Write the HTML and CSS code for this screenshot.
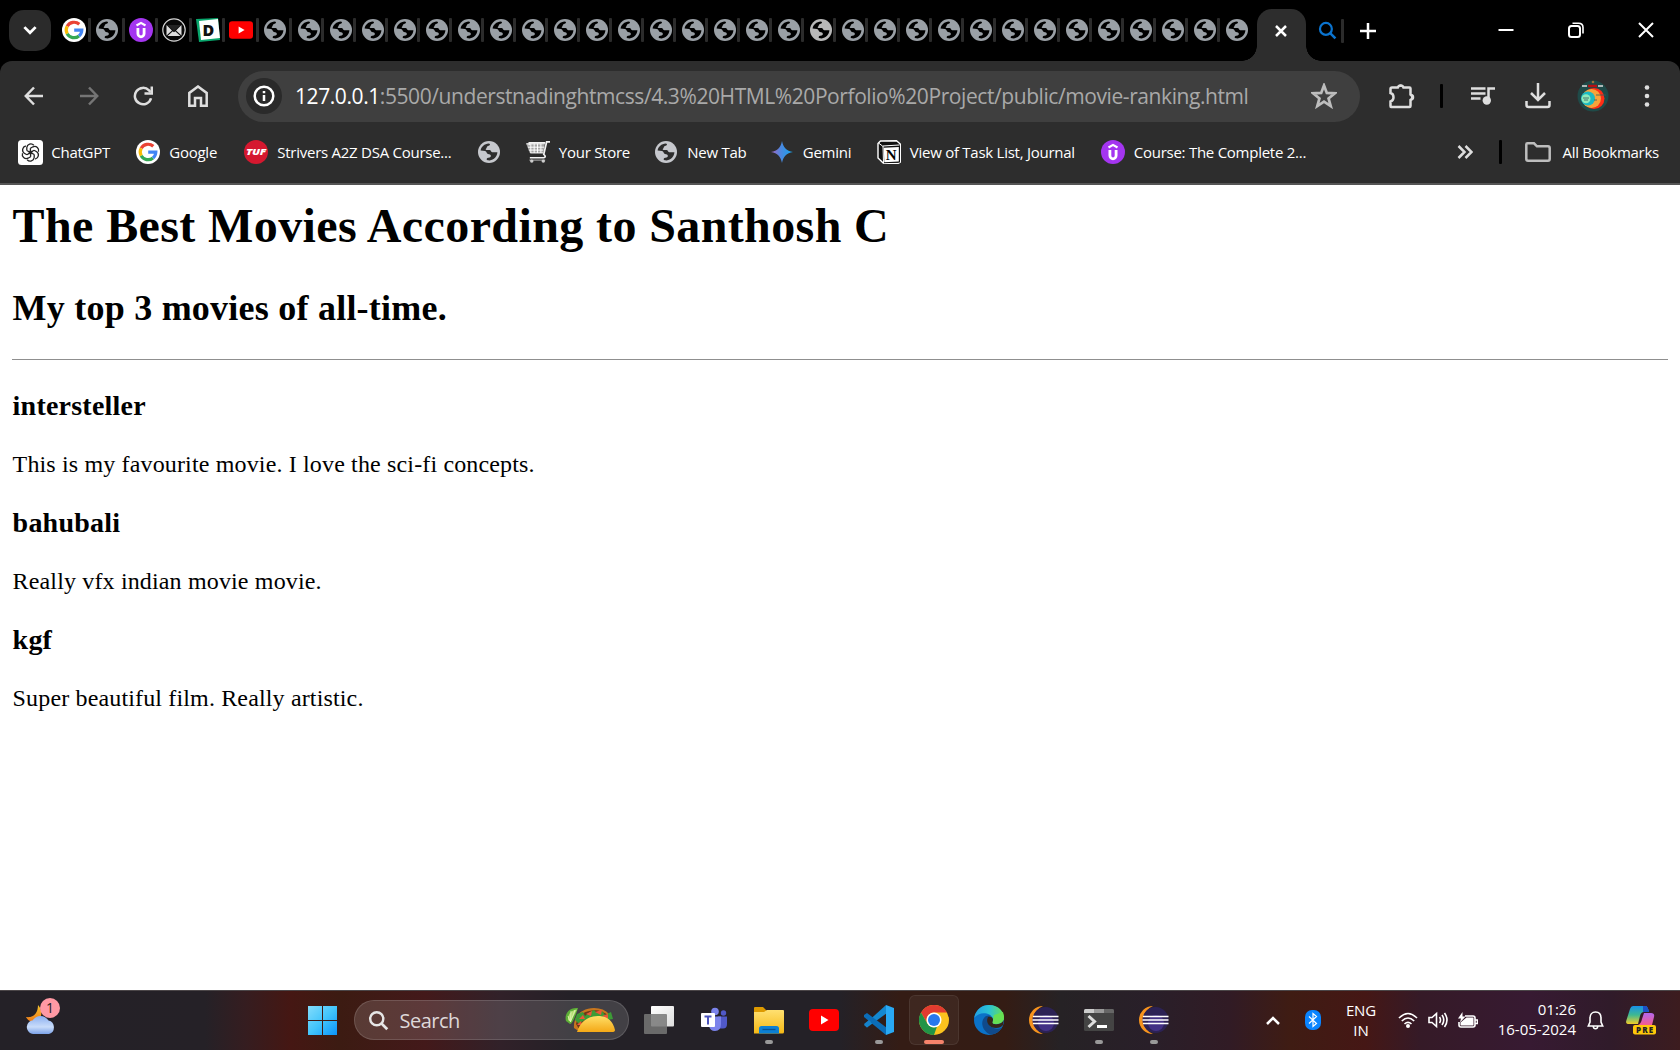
FILE: index.html
```html
<!DOCTYPE html>
<html lang="en">
<head>
<meta charset="utf-8">
<title>Movie ranking</title>
<link rel="stylesheet" href="styles.css">
</head>
<body>
<svg class="defs" aria-hidden="true">
  <symbol id="globe" viewBox="0 0 24 24"><circle cx="12" cy="12" r="11" fill="currentColor"/><path class="cut" d="M3.6 10.4C4.2 6.8 7.4 3.8 11.8 3.5C14 4 12.8 5.8 11 6C9.3 6.3 10.2 8 9 8.7C8 9.2 9 10 10.2 10H12.6C14 10 13.8 12 15.2 12.2L20.4 12.3C20.2 16.6 17 20.1 12.6 20.4L9.8 20C9.3 18 10.8 17.7 12.6 17.5C14 17.2 14.4 15 13 14.4L11 14C9.6 13.6 9.7 11.3 8 10.9Z"/></symbol>
  <symbol id="google" viewBox="0 0 24 24"><circle cx="12" cy="12" r="12" fill="#fff"/><g fill="none" stroke-width="3.2"><path d="M5.2 8.3A7.8 7.8 0 0 1 17.3 6.3" stroke="#ea4335"/><path d="M5.2 15.7A7.8 7.8 0 0 1 5.2 8.3" stroke="#fbbc05"/><path d="M17 17.9A7.8 7.8 0 0 1 5.2 15.7" stroke="#34a853"/><path d="M12.2 12.2H19.8A7.8 7.8 0 0 1 17 17.9" stroke="#4285f4"/></g></symbol>
  <symbol id="udemy" viewBox="0 0 24 24"><circle cx="12" cy="12" r="12" fill="#a435f0"/><path d="M7.5 7.5L12 4.900L16.500 7.5" fill="none" stroke="#fff" stroke-width="2.2"/><path d="M8.900 10V15.500A3.100 3.300 0 0 0 15.100 15.500V10" fill="none" stroke="#fff" stroke-width="2.800"/></symbol>
  <symbol id="youtube" viewBox="0 0 30 22"><rect width="30" height="22" rx="4" fill="#f00"/><path d="M12 6.500L19.500 11L12 15.500Z" fill="#fff"/></symbol>
  <symbol id="eclipse" viewBox="0 0 30 30"><path d="M14 1A14 14 0 0 0 14 29A15 15 0 0 1 14 1Z" fill="#f7941e"/><circle cx="16.500" cy="15" r="13" fill="#2c2255"/><circle cx="17" cy="18" r="8" fill="#433185"/><path d="M4 11.500H29.500M3.500 15H29.500M4 18.500H29.500" stroke="#fff" stroke-width="1.700"/></symbol>
  <symbol id="lens" viewBox="0 0 24 24"><circle cx="10" cy="10" r="7.500" fill="none" stroke="currentColor" stroke-width="2.800"/><path d="M15 15L22 22" stroke="currentColor" stroke-width="3.200"/></symbol>
</svg>

<header class="browser">
  <div class="tabstrip">
    <button class="tab-search" aria-label="Search tabs"><svg viewBox="0 0 12 8" width="14" height="9"><path d="M1 1L6 6L11 1" class="line"/></svg></button>
    <div class="tabs">
      <span class="tab wide"><svg><use href="#google"/></svg></span>
      <span class="tab wide"><svg><use href="#globe"/></svg></span>
      <span class="tab wide"><svg><use href="#udemy"/></svg></span>
      <span class="tab wide"><svg viewBox="0 0 24 24"><circle cx="12" cy="12" r="11.200" fill="#080808" stroke="#d5d5d5" stroke-width="1.200"/><path d="M5 7H19L12 13Z" fill="#222"/><path d="M4.500 7L10 12.500L4.500 17.500ZM19.500 7L14 12.500L19.500 17.500ZM5.500 18L10.800 13.300L12 14.300L13.200 13.300L18.500 18Z" fill="#dedede"/></svg></span>
      <span class="tab wide"><svg viewBox="0 0 24 24"><path d="M0 1L22 0L24 22L3 24Z" fill="#08a66c"/><path d="M3 3L22 1L24 20L5 22Z" fill="#fff"/><text x="6.500" y="17.500" class="letter-d">D</text></svg></span>
      <span class="tab wide"><svg class="yt"><use href="#youtube"/></svg></span>
      <span class="tab wide"><svg><use href="#globe"/></svg></span>
      <span class="tab"><svg><use href="#globe"/></svg></span>
      <span class="tab"><svg><use href="#globe"/></svg></span>
      <span class="tab"><svg><use href="#globe"/></svg></span>
      <span class="tab"><svg><use href="#globe"/></svg></span>
      <span class="tab"><svg><use href="#globe"/></svg></span>
      <span class="tab"><svg><use href="#globe"/></svg></span>
      <span class="tab"><svg><use href="#globe"/></svg></span>
      <span class="tab"><svg><use href="#globe"/></svg></span>
      <span class="tab"><svg><use href="#globe"/></svg></span>
      <span class="tab"><svg><use href="#globe"/></svg></span>
      <span class="tab"><svg><use href="#globe"/></svg></span>
      <span class="tab"><svg><use href="#globe"/></svg></span>
      <span class="tab"><svg><use href="#globe"/></svg></span>
      <span class="tab"><svg><use href="#globe"/></svg></span>
      <span class="tab"><svg><use href="#globe"/></svg></span>
      <span class="tab"><svg><use href="#globe"/></svg></span>
      <span class="tab light"><svg><use href="#globe"/></svg></span>
      <span class="tab"><svg><use href="#globe"/></svg></span>
      <span class="tab"><svg><use href="#globe"/></svg></span>
      <span class="tab"><svg><use href="#globe"/></svg></span>
      <span class="tab"><svg><use href="#globe"/></svg></span>
      <span class="tab"><svg><use href="#globe"/></svg></span>
      <span class="tab"><svg><use href="#globe"/></svg></span>
      <span class="tab"><svg><use href="#globe"/></svg></span>
      <span class="tab"><svg><use href="#globe"/></svg></span>
      <span class="tab"><svg><use href="#globe"/></svg></span>
      <span class="tab"><svg><use href="#globe"/></svg></span>
      <span class="tab"><svg><use href="#globe"/></svg></span>
      <span class="tab"><svg><use href="#globe"/></svg></span>
      <span class="tab last"><svg><use href="#globe"/></svg></span>
    </div>
    <div class="tab-active"><svg viewBox="0 0 12 12" width="12" height="12"><path d="M1 1L11 11M11 1L1 11" class="line"/></svg></div>
    <div class="tab-find"><svg><use href="#lens"/></svg></div>
    <svg class="new-tab" viewBox="0 0 16 16"><path d="M8 0V16M0 8H16" class="line"/></svg>
    <div class="window-controls">
      <svg viewBox="0 0 16 16"><path d="M0.500 8H15.500" class="line"/></svg>
      <svg viewBox="0 0 16 16"><rect x="1" y="4" width="11" height="11" rx="2.500" class="line"/><path d="M4.500 1.200H10.500Q15 1.200 15 5.500V11.500" class="line thin"/></svg>
      <svg viewBox="0 0 16 16"><path d="M1 1L15 15M15 1L1 15" class="line"/></svg>
    </div>
  </div>

  <div class="toolbar">
    <nav class="nav">
      <svg viewBox="0 0 20 20"><path d="M19 10H2M10 1.500L1.800 10L10 18.500" class="line"/></svg>
      <svg viewBox="0 0 20 20" class="dim"><path d="M1 10H18M10 1.500L18.200 10L10 18.500" class="line"/></svg>
      <svg viewBox="0 0 20 20"><path d="M18 12.200A8.200 8.200 0 1 1 16 4.400L17.500 6" class="line"/><path d="M18.800 0.500V7.600H11.500" class="line"/></svg>
      <svg viewBox="0 0 20 22" class="home"><path d="M1.300 20.700V8L10 1.500L18.700 8V20.700H13V13H7V20.700Z" class="line"/></svg>
    </nav>
    <div class="omnibox">
      <span class="site-info"><svg viewBox="0 0 22 22"><circle cx="11" cy="11" r="9.300" class="line"/><path d="M11 10V16M11 6V8.200" class="line"/></svg></span>
      <span class="url"><b>127.0.0.1</b>:5500/understnadinghtmcss/4.3%20HTML%20Porfolio%20Project/public/movie-ranking.html</span>
      <svg class="star" viewBox="0 0 24 24"><path d="M12 2.300L14.600 9.200L22 9.500L16.200 14.200L18.200 21.300L12 17.200L5.800 21.300L7.800 14.200L2 9.500L9.400 9.200Z" class="line"/></svg>
    </div>
    <div class="actions">
      <svg class="puzzle" viewBox="0 0 26 26"><path d="M3 4.500H8.800A3 3 0 0 1 14.500 4.500H20.500Q21.500 4.500 21.500 5.500V11.500A3 3 0 0 1 21.500 17V23Q21.500 24 20.500 24H2Q1.500 24 1.500 23V18.500C5.500 17.500 5.500 11 1.500 10V6Q1.500 4.500 3 4.500Z" class="line"/><path d="M8.500 4A3.200 3.200 0 0 1 14.700 4ZM22 11A3.200 3.200 0 0 1 22 17.500Z" fill="currentColor"/></svg>
      <span class="divider"></span>
      <svg class="media" viewBox="0 0 24 20"><path d="M0 2.500H14.500M0 7.500H14.500M0 12.500H9.500M17.500 14V2.500H24" class="line"/><circle cx="15.800" cy="14.500" r="4.200" fill="currentColor"/></svg>
      <svg class="download" viewBox="0 0 26 26"><path d="M13 0V17M6 10L13 17L20 10M1.500 18V22Q1.500 24 3.500 24H22.500Q24.500 24 24.500 22V18" class="line"/></svg>
      <svg class="avatar" viewBox="0 0 32 32"><circle cx="16" cy="16" r="15.500" fill="#1f4a48"/><circle cx="17" cy="18.500" r="10.500" fill="#ff2d16"/><circle cx="14.500" cy="18.500" r="9.500" fill="#f6a33a"/><circle cx="11" cy="18.500" r="7" fill="#19b9c2"/><circle cx="9" cy="18.800" r="4.500" fill="#8ee9ba"/><path d="M6 18H12M7 20H11M19 15H29M17 20H20" stroke="#355c5a" stroke-width=".8"/><path d="M5 6H10M21 6H26" stroke="#ddd" stroke-width="1.600"/><path d="M11 6H20" stroke="#b80f13" stroke-width="2.500"/><circle cx="16" cy="2" r="1.300" fill="#a0733b"/></svg>
      <svg class="more" viewBox="0 0 6 24"><circle cx="3" cy="3.500" r="2.300"/><circle cx="3" cy="12" r="2.300"/><circle cx="3" cy="20.500" r="2.300"/></svg>
    </div>
  </div>

  <div class="bookmarks">
    <a class="bm"><svg viewBox="0 0 25 25"><rect width="25" height="25" rx="3.500" fill="#fff"/><g fill="none" stroke="#222" stroke-width="1.300"><path id="knot" d="M8.800 10.500V7.500A4 4 0 0 1 15.800 5.200M8.800 10.500L14.500 13.700"/><use href="#knot" transform="rotate(60 12.500 12.500)"/><use href="#knot" transform="rotate(120 12.500 12.500)"/><use href="#knot" transform="rotate(180 12.500 12.500)"/><use href="#knot" transform="rotate(240 12.500 12.500)"/><use href="#knot" transform="rotate(300 12.500 12.500)"/></g></svg>ChatGPT</a>
    <a class="bm"><svg><use href="#google"/></svg>Google</a>
    <a class="bm"><svg viewBox="0 0 24 24"><circle cx="12" cy="12" r="12" fill="#d5182f"/><text x="2" y="15.300" class="tuf" textLength="20" lengthAdjust="spacingAndGlyphs">TUF</text></svg>Strivers A2Z DSA Course...</a>
    <a class="bm"><svg class="world"><use href="#globe"/></svg></a>
    <a class="bm"><svg viewBox="0 0 25 24"><path d="M0 3L19.500 4L18 13H4Z" fill="#a5a5a5"/><path d="M0.500 3.500H19.500M2 7H19M3 10H18M4.500 13H18M5 3V13M8.500 3V13M12 3V13M15.500 3V13" stroke="#fff" stroke-width="1"/><path d="M3.500 5V2.500H20M25 1.500H21.500L18.500 14.500Q21.500 17 18.500 18H4" fill="none" stroke="#f2f2f2" stroke-width="1.800"/><path d="M3.500 20.500H20" stroke="#888" stroke-width="1.500"/><circle cx="6" cy="21.500" r="1.800" fill="#ccc"/><circle cx="18" cy="21.500" r="1.800" fill="#ccc"/></svg>Your Store</a>
    <a class="bm"><svg class="world"><use href="#globe"/></svg>New Tab</a>
    <a class="bm"><svg viewBox="0 0 24 24"><defs><linearGradient id="gem"><stop offset="0" stop-color="#a566c2"/><stop offset=".45" stop-color="#4b87df"/><stop offset="1" stop-color="#14a5ee"/></linearGradient></defs><path d="M12 1C13.200 7.500 16.500 10.800 23 12C16.500 13.200 13.200 16.500 12 23C10.800 16.500 7.500 13.200 1 12C7.500 10.800 10.800 7.500 12 1Z" fill="url(#gem)"/></svg>Gemini</a>
    <a class="bm"><svg viewBox="0 0 24 24"><path d="M1 3.500L3.500 1L19.500 .8L23.300 4V22L21 23.500L6.500 23.300L1 18Z" fill="#111" stroke="#fff" stroke-width="1.400"/><path d="M5.500 6L23 5V22.500L6.500 23.300Z" fill="#111"/><path d="M6.800 7.800L21.800 7V21.500L7.300 22.200Z" fill="#fff"/><path d="M1.500 3L5.500 6L22.500 5M6 6L6.500 23" stroke="#fff" fill="none"/><text x="8.700" y="19.500" class="notion">N</text></svg>View of Task List, Journal</a>
    <a class="bm"><svg><use href="#udemy"/></svg>Course: The Complete 2...</a>
    <div class="bm-end">
      <svg class="chevrons" viewBox="0 0 16 14"><path d="M1.500 1L7.500 7L1.500 13M8.500 1L14.500 7L8.500 13" class="line"/></svg>
      <span class="divider"></span>
      <svg class="folder" viewBox="0 0 26 20"><path d="M1.300 2.500Q1.300 1.300 2.500 1.300H9L12 4.300H23Q24.700 4.300 24.700 6V17Q24.700 18.700 23 18.700H3Q1.300 18.700 1.300 17Z" class="line"/></svg>
      <span>All Bookmarks</span>
    </div>
  </div>
</header>

<main class="page">
  <h1>The Best Movies According to Santhosh C</h1>
  <h2>My top 3 movies of all-time.</h2>
  <hr>
  <h3>intersteller</h3>
  <p>This is my favourite movie. I love the sci-fi concepts.</p>
  <h3>bahubali</h3>
  <p>Really vfx indian movie movie.</p>
  <h3>kgf</h3>
  <p>Super beautiful film. Really artistic.</p>
</main>

<footer class="taskbar">
  <div class="weather">
    <svg viewBox="0 0 30 30"><defs><linearGradient id="moon" x2="0" y2="1"><stop stop-color="#f7c52e"/><stop offset="1" stop-color="#ee7818"/></linearGradient><linearGradient id="cloud" x2="0" y2="1"><stop stop-color="#8cb0f0"/><stop offset=".6" stop-color="#c9dcfa"/><stop offset="1" stop-color="#7ba2e8"/></linearGradient></defs><path d="M12 0C19 8 14 18 6 17C3 16 1 14 0 12C8 13 12 8 12 0Z" fill="url(#moon)"/><path d="M7 29A7 7 0 0 1 3 17Q5 15 6.500 15.500A9.500 9.500 0 0 1 22.500 15.500A7 7 0 0 1 23 29Z" fill="url(#cloud)"/></svg>
    <span class="badge">1</span>
  </div>
  <svg class="start" viewBox="0 0 29 29"><defs><linearGradient id="win" gradientUnits="userSpaceOnUse" x1="0" y1="0" x2="29" y2="29"><stop stop-color="#83dcfb"/><stop offset=".5" stop-color="#43c5fb"/><stop offset="1" stop-color="#0b93fa"/></linearGradient></defs><path d="M0 0H14V14H0ZM15 0H29V14H15ZM0 15H14V29H0ZM15 15H29V29H15Z" fill="url(#win)"/></svg>
  <div class="search"><svg class="mag"><use href="#lens"/></svg><span>Search</span>
    <svg class="taco" viewBox="0 0 50 26"><defs><linearGradient id="shell" x2="0" y2="1"><stop stop-color="#ffdf68"/><stop offset="1" stop-color="#f4a816"/></linearGradient></defs><path d="M13 1C4 0-1 7 1 14L5 17Q8 17 13 1Z" fill="#5daf37"/><path d="M12 2.500C6 3 2.500 8 3 13L5.500 15Z" fill="#b5df73"/><path d="M5.500 15L6 4M5.500 15L10 3M5 14L3 9" stroke="#eaf7c8" stroke-width=".7"/><path d="M9 21C8 9 17 1 29 1Q39 1 44 7L26 23H12Z" fill="#c9771e"/><path d="M11 17Q13 6 24 4Q35 1 44 9L40 15L20 14L14 22Z" fill="#713719"/><path d="M12 7L18 5L20 9L25 5L29 3L32 6L37 4L40 8L46 5L48 12L42 13L35 9L26 11L18 14L14 17L10 13Z" fill="#3d9b36"/><path d="M14 12L18 8L20 12ZM21 7L27 4L26 9ZM30 5L37 3L36 8ZM37 9L43 7L43 12ZM12 18L16 14L17 18Z" fill="#ec5638"/><path d="M12 25C15 14 25 8 35 9Q47 10 50 23Q50 25 47 25Z" fill="url(#shell)"/></svg>
  </div>
  <div class="apps">
    <span class="app"><svg viewBox="0 0 30 30"><defs><linearGradient id="tv" x2="1" y2="1"><stop stop-color="#fff"/><stop offset="1" stop-color="#ddd"/></linearGradient></defs><rect x="7" y="1" width="23" height="20.500" rx="1" fill="url(#tv)"/><rect y="9" width="23" height="20" rx="1" fill="#777" fill-opacity=".85"/></svg></span>
    <span class="app"><svg viewBox="0 0 30 30"><circle cx="16" cy="6.500" r="3.800" fill="#7b83eb"/><circle cx="24.500" cy="8" r="2.700" fill="#5059c9"/><path d="M19 11.500H28V19Q28 23.500 24 23.500H19Z" fill="#5059c9"/><path d="M10 11.500H22V19Q22 26 16 26Q11 26 10 21Z" fill="#7b83eb"/><rect x="2" y="8" width="14" height="14" rx="1" fill="#fff"/><path d="M5.500 11.500H12.500M9 11.500V19.500" stroke="#4b53bc" stroke-width="2"/></svg></span>
    <span class="app run"><svg viewBox="0 0 30 30"><defs><linearGradient id="fold" x2="0" y2="1"><stop stop-color="#ffe071"/><stop offset="1" stop-color="#f5b915"/></linearGradient></defs><path d="M0 3Q0 2 1 2H9L13 6V10H0Z" fill="#dd9a00"/><path d="M0 7H10L13 5H29Q30 5 30 6V27Q30 28.500 28.500 28.500H0Z" fill="url(#fold)"/><path d="M5 28.500V23.500Q5 21 7.500 21H22.500Q25 21 25 23.500V28.500Z" fill="#0c80d3"/><path d="M8.500 24.500H21.500" stroke="#075293" stroke-width="1.300"/></svg></span>
    <span class="app"><svg><use href="#youtube"/></svg></span>
    <span class="app run"><svg viewBox="0 0 30 30"><path d="M0 20L22 0L23 8L3 22.500Z" fill="#1488d0"/><path d="M0 10L3 8L23 23L22 30L0 12Z" fill="#0b6db8"/><path d="M22 0L30 3V27L22 30Z" fill="#29a9f4"/><path d="M0 19L5 15L7 17L3 22.500Z" fill="#1682ca"/></svg></span>
    <span class="app current"><svg viewBox="0 0 30 30"><circle cx="15" cy="15" r="15" fill="#fcc31e"/><path d="M2 7.500A15 15 0 0 1 28 7.500H15A7.500 7.500 0 0 0 8.500 18.700Z" fill="#e23b30"/><path d="M2 7.500L8.500 18.750A7.500 7.500 0 0 0 18 21.500L15 30A15 15 0 0 1 2 7.500Z" fill="#219447"/><circle cx="15" cy="15" r="7.500" fill="#fff"/><circle cx="15" cy="15" r="6" fill="#2878ec"/></svg></span>
    <span class="app"><svg viewBox="0 0 30 30"><defs><linearGradient id="edgetop"><stop stop-color="#219ee4"/><stop offset=".5" stop-color="#2bc3d5"/><stop offset="1" stop-color="#66df54"/></linearGradient></defs><circle cx="15" cy="15" r="15" fill="#0b72c8"/><path d="M0 13C2 4 8 0 15 0C25 0 30 7 30 13C30 18 25 20 20 19C16 18 19 17 19 14C18 8 6 5 0 13Z" fill="url(#edgetop)"/><path d="M12 11C6 15 7 25 16 29.500C21 30 26 26 28 22.500C21 26 13 21 14 15Q14 12 17 11Q15 10 12 11Z" fill="#104a8b"/><path d="M14 12C11 18 16 23 22 23Q27 23 29 20L30 12Q30 18 24 19C17 20 19 17 19 14Q18 11 14 12Z" fill="#35251b"/><path d="M19 14C20 17 16 19 22 19Q30 18 30 12L29 7L20 10Z" fill="#66df54"/></svg></span>
    <span class="app"><svg><use href="#eclipse"/></svg></span>
    <span class="app run"><svg viewBox="0 0 30 30"><rect y="4" width="30" height="22" rx="1.500" fill="#444"/><path d="M0 8V5.500Q0 4 1.500 4H10V8Z" fill="#ccc"/><path d="M10 4H20V8H10Z" fill="#999"/><path d="M20 4H28.500Q30 4 30 5.500V8H20Z" fill="#666"/><path d="M4.500 11L10.500 16.500L4.500 22" fill="none" stroke="#ddd" stroke-width="3"/><path d="M13 21.500H23" stroke="#fff" stroke-width="3"/></svg></span>
    <span class="app run"><svg><use href="#eclipse"/></svg></span>
  </div>
  <div class="tray">
    <svg class="up" viewBox="0 0 14 9"><path d="M1 8L7 2L13 8" class="line"/></svg>
    <svg class="bt" viewBox="0 0 16 20"><rect width="16" height="20" rx="7" fill="#0a84ff"/><path d="M4 6.500L11.500 13.500L8 16.500V3.500L11.500 6.500L4 13.500" fill="none" stroke="#fff" stroke-width="1.200"/></svg>
    <span class="lang">ENG<br>IN</span>
    <svg class="wifi" viewBox="0 0 20 16"><path d="M1 6Q10-3 19 6M3.800 9Q10 3 16.200 9M6.500 12Q10 8.700 13.500 12" class="line thin"/><circle cx="10" cy="14" r="2" fill="#fff"/></svg>
    <svg class="vol" viewBox="0 0 20 18"><path d="M1 6.500H4L8.500 2.500V15.500L4 11.500H1ZM11.500 6Q13.500 9 11.500 12M14 4Q17.500 9 14 14M16.500 2Q21.500 9 16.500 16" class="line thin"/></svg>
    <svg class="bat" viewBox="0 0 20 17"><path d="M7 4H15Q17 4 17 6V13Q17 15 15 15H3Q1 15 1 13V10M17 8H19.500V11.500H17" class="line thin"/><path d="M8.500 5.500H15.500V13.500H2.500V10.500Z" fill="#fff"/><path d="M4.500 0L0 6.500H3L2 10.500L7.500 4.500H4.500Z" fill="#fff"/></svg>
    <span class="clock">01:26<br>16-05-2024</span>
    <svg class="bell" viewBox="0 0 16 19"><path d="M8 1C4.500 1 2.500 3.500 2.500 7V11L.8 15H15.200L13.500 11V7C13.500 3.500 11.500 1 8 1ZM5.800 15.500Q6 17.800 8 17.800T10.200 15.500" class="line thin"/></svg>
    <svg class="copilot" viewBox="0 0 30 30"><defs><linearGradient id="cp1" x2="0" y2="1"><stop stop-color="#1790e8"/><stop offset=".5" stop-color="#3eb991"/><stop offset="1" stop-color="#f3cc28"/></linearGradient><linearGradient id="cp2" x2="0" y2="1"><stop stop-color="#b267ee"/><stop offset="1" stop-color="#f45c8d"/></linearGradient></defs><path d="M18 8H25Q29 8 28 12L26 20H12Q15 19 16 14Z" fill="url(#cp2)"/><path d="M7 1H20Q22 2 23 7H18Q15 7 14 11L12 19H3Q-1 19 .500 15L4 4Q5 1 7 1Z" fill="url(#cp1)"/><path d="M17 1H20Q22 2 23 7H17Z" fill="#1b50c5"/><rect x="7" y="20" width="23" height="9.500" rx="2" fill="#ffc80a"/><text x="10" y="27.800" class="pre" textLength="17">PRE</text></svg>
  </div>
</footer>
</body>
</html>
```
FILE: styles.css
```css
* { box-sizing: border-box; }
body { margin: 0; width: 1680px; height: 1050px; overflow: hidden; display: flex; flex-direction: column; background: #fff; font-family: "Open Sans", "Noto Sans", sans-serif; }
svg { display: block; flex: none; }
.defs { position: absolute; width: 0; height: 0; }
.line { fill: none; stroke: currentColor; stroke-width: 2.5; }
.line.thin { stroke-width: 1.6; }

/* tab strip */
.browser { flex: none; height: 185px; background: #000; color: #fff; }
.tabstrip { display: flex; height: 61px; padding-left: 9px; }
.tab-search { display: grid; place-items: center; width: 42px; height: 41px; margin: 10px 6.5px 0 0; padding: 0; border: 0; border-radius: 15px; background: #2b2b2b; color: #fff; }
.tabs { display: flex; height: 61px; --cut: #000; color: #9aa0a6; }
.tab { display: flex; align-items: center; width: 32px; padding: 0 0 1px 5px; }
.tab.wide { width: 33.5px; padding-left: 4.3px; }
.tab svg { width: 24px; height: 24px; }
.tab::after { content: ""; width: 3px; height: 24px; margin-left: auto; border-radius: 1px; background: #2b2b2b; }
.tab.last::after { display: none; }
.tab.light { color: #b8b8b8; }
.cut { fill: var(--cut); }
.letter-d { font: 800 16px "Open Sans", sans-serif; fill: #111; }
.tab-active { position: relative; display: grid; place-items: center; width: 49px; height: 52px; margin: 9px 0 0 4.5px; border-radius: 15px 15px 0 0; background: #2d2d2d; padding-bottom: 9px; }
.tab-active::before, .tab-active::after { content: ""; position: absolute; bottom: 0; width: 15px; height: 15px; }
.tab-active::before { right: 100%; background: radial-gradient(circle at 0 0, #0000 14.5px, #2d2d2d 15px); }
.tab-active::after { left: 100%; background: radial-gradient(circle at 100% 0, #0000 14.5px, #2d2d2d 15px); }
.tab-find { display: flex; align-items: center; width: 38px; margin-left: 12px; color: #0b74cf; }
.tab-find svg { width: 19px; height: 19px; }
.tab-find::after { content: ""; width: 3px; height: 24px; margin-left: 4px; border-radius: 1px; background: #2b2b2b; }
.new-tab { width: 16px; height: 16px; margin: 22.5px 0 0 4px; }
.window-controls { display: flex; gap: 54px; margin: 22px 26px 0 auto; }
.window-controls svg { width: 16px; height: 16px; }
.window-controls .line { stroke-width: 2; }
.window-controls .thin { stroke-width: 1.6; }

/* toolbar */
.toolbar { display: flex; align-items: center; height: 70px; border-radius: 12px 12px 0 0; background: #2d2d2d; color: #dedede; }
.nav { display: flex; align-items: center; gap: 34.5px; width: 238px; padding-left: 24px; }
.nav svg { width: 20px; height: 20px; }
.nav .home { height: 22px; margin-top: -1px; }
.dim { color: #757575; }
.omnibox { display: flex; align-items: center; width: 1122px; height: 51px; padding-left: 8px; border-radius: 26px; background: #3f3f3f; }
.site-info { display: grid; place-items: center; width: 36px; height: 36px; border-radius: 50%; background: #2a2a2a; color: #fff; }
.site-info svg { width: 22px; height: 22px; }
.url { width: 1016px; margin-left: 13px; font-size: 21px; letter-spacing: -.42px; white-space: nowrap; color: #a9a9a9; }
.url b { font-weight: 400; color: #fff; }
.star { width: 26px; height: 26px; color: #bdbdbd; }
.actions { display: flex; align-items: center; }
.puzzle { width: 26px; height: 26px; margin-left: 28.5px; }
.divider { width: 3px; height: 24px; border-radius: 1px; background: #000; }
.actions .divider { margin-left: 25.5px; }
.media { width: 24px; height: 20px; margin-left: 28px; }
.download { width: 26px; height: 26px; margin-left: 29.5px; }
.avatar { width: 32px; height: 32px; margin-left: 26px; }
.more { width: 6px; height: 24px; margin-left: 35.5px; fill: currentColor; }

/* bookmarks bar */
.bookmarks { display: flex; height: 54px; padding: 0 0 10px 18px; border-bottom: 2px solid #555; background: #2d2d2d; font-size: 15px; letter-spacing: -.26px; white-space: nowrap; }
.bm { display: flex; align-items: center; gap: 9.3px; width: 118px; }
.bm svg { width: 24px; height: 24px; }
.bm:first-child { gap: 8.3px; }
.bm:first-child svg { width: 25px; height: 25px; }
.bm:nth-child(2) { width: 108px; }
.bm:nth-child(3) { width: 233px; }
.bm:nth-child(4) { width: 48.5px; }
.bm:nth-child(5) { width: 128.5px; }
.bm:nth-child(6) { width: 115.5px; }
.bm:nth-child(7) { width: 107px; }
.bm:nth-child(8), .bm:nth-child(9) { width: 224px; }
.world { --cut: #2d2d2d; color: #c6c8cd; }
.tuf { font: italic 800 9px "Open Sans", sans-serif; fill: #fff; }
.notion { font: 700 15px "Liberation Serif", serif; fill: #000; }
.bm-end { display: flex; align-items: center; margin-left: auto; padding-right: 21px; }
.chevrons { width: 16px; height: 14px; margin-right: 26px; color: #dedede; }
.folder { width: 26px; height: 20px; margin: 0 11px 0 23.5px; color: #bdbdbd; }

/* web page */
.page { flex: 1; padding: 13px 12px 0; font: 24px "Liberation Serif", "Times New Roman", serif; color: #000; overflow: hidden; }
.page h1, .page h2, .page h3, .page p { text-indent: .6px; }
.page h1 { margin: 0 0 34px; font-size: 48px; letter-spacing: .39px; }
.page h2 { margin: 0 0 30px; font-size: 36px; letter-spacing: .23px; }
.page hr { height: 1px; margin: 0 0 29px; border: 0; background: #8f8f8f; }
.page h3 { margin: 28px 0; font-size: 28px; line-height: 33px; letter-spacing: .22px; }
.page p { margin: 0; line-height: 28px; letter-spacing: .15px; }

/* taskbar */
.taskbar { flex: none; display: flex; align-items: center; height: 60px; padding-bottom: 1px; border-top: 1px solid #4b4648; color: #fff; background: linear-gradient(90deg, #242127 0, #252127 205px, #351d20 245px, #451713 290px, #3c1b12 340px, #43191a 425px, #312129 500px, #242127 570px, #242127 840px, #341c15 900px, #341c14 1005px, #262225 1060px, #291f29 1150px, #311b25 1230px, #3f1c13 1290px, #451715 1365px, #351a27 1420px, #371a32 1530px, #301b2a 1610px, #3c1c1f 1680px); }
.weather { position: relative; width: 30px; height: 30px; margin-left: 26px; }
.weather svg { width: 30px; height: 30px; }
.badge { position: absolute; left: 14px; top: -7px; width: 20px; height: 20px; border-radius: 50%; background: #ff99a4; color: #222; font-size: 14px; line-height: 20px; text-align: center; }
.start { width: 29px; height: 29px; margin-left: 252px; }
.search { display: flex; align-items: center; width: 275px; height: 40px; margin-left: 17px; padding: 0 13px 0 13px; border: 1px solid #ffffff24; border-radius: 20px; background: #ffffff24; color: #ded8d9; font-size: 20px; letter-spacing: -.5px; }
.mag { width: 21px; height: 21px; margin-right: 10.5px; color: #e6e6e6; }
.taco { width: 50px; height: 26px; margin-left: auto; }
.apps { display: flex; gap: 5px; margin-left: 5px; }
.app { position: relative; display: grid; place-items: center; width: 50px; height: 50px; border-radius: 6px; }
.app svg { width: 30px; height: 30px; }
.app.current { background: #ffffff0d; box-shadow: inset 0 0 0 1px #ffffff12; }
.app.run::after, .app.current::after { content: ""; position: absolute; left: 21px; bottom: 1px; width: 8px; height: 4px; border-radius: 2px; background: #999; }
.app.current::after { left: 15px; width: 20px; background: #f6836b; }
.tray { display: flex; align-items: center; margin-left: 87px; font-size: 15px; line-height: 20px; letter-spacing: -.1px; }
.up { width: 14px; height: 9px; }
.bt { width: 16px; height: 20px; margin-left: 25px; }
.lang { width: 40px; margin-left: 20px; padding-bottom: 1px; text-align: center; }
.wifi { width: 20px; height: 16px; margin-left: 17px; }
.vol { width: 20px; height: 18px; margin-left: 10px; }
.bat { width: 20px; height: 17px; margin-left: 10px; }
.clock { width: 98px; padding-bottom: 3px; text-align: right; letter-spacing: 0; }
.bell { width: 17px; height: 19px; margin-left: 10.5px; }
.copilot { width: 30px; height: 30px; margin-left: 22px; }
.pre { font: 800 8px "Open Sans", sans-serif; fill: #222; }
```
